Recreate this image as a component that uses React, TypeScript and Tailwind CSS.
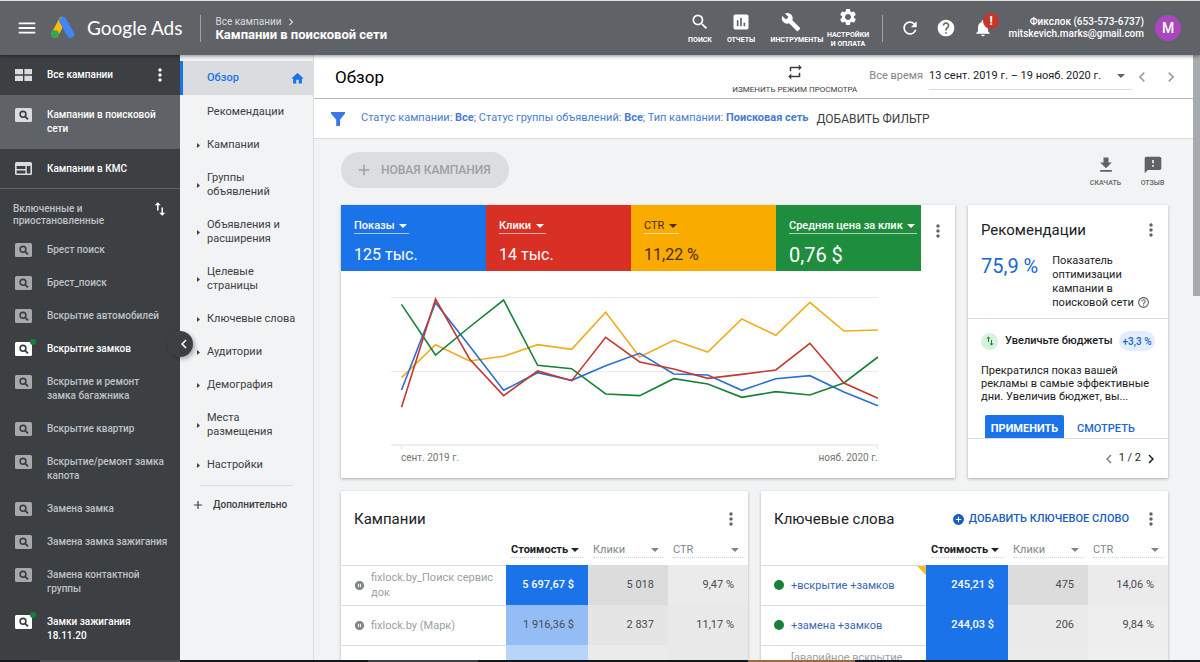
import type { ReactNode } from "react";
import {
  MdAdd,
  MdAddCircle,
  MdAssessment,
  MdBuild,
  MdChevronLeft,
  MdChevronRight,
  MdFeedback,
  MdGetApp,
  MdHelp,
  MdHelpOutline,
  MdHome,
  MdMenu,
  MdMoreVert,
  MdNotifications,
  MdPauseCircleFilled,
  MdRefresh,
  MdRepeat,
  MdSearch,
  MdSettings,
  MdSwapVert,
} from "react-icons/md";

function AdsLogo() {
  return (
    <svg viewBox="0 0 26 26" className="size-[26px] shrink-0" aria-hidden="true">
      <path d="M12.200 5.600 5.300 18.600" stroke="#fbbc04" strokeWidth="7.200" strokeLinecap="round" />
      <path d="M12.800 5.600 20.600 19.200" stroke="#4285f4" strokeWidth="7.400" strokeLinecap="round" />
      <circle cx="5" cy="19.200" r="3.900" fill="#34a853" />
    </svg>
  );
}

function Caret({ className = "" }: { className?: string }) {
  return (
    <svg viewBox="0 0 8 4" className={"h-1 w-2 shrink-0 fill-current " + className} aria-hidden="true">
      <path d="M0 0h8L4 4z" />
    </svg>
  );
}

function SearchTile({ className = "" }: { className?: string }) {
  return (
    <svg viewBox="0 0 17 14" className={"h-[14px] w-[17px] " + className} aria-hidden="true">
      <rect width="17" height="14" rx="1.5" fill="currentColor" />
      <circle cx="8" cy="6.300" r="2.900" fill="none" stroke="#3c4043" strokeWidth="1.600" />
      <path d="m10 8.400 3 3" stroke="#3c4043" strokeWidth="1.900" />
    </svg>
  );
}

function GridTile() {
  return (
    <svg viewBox="0 0 17 12" className="h-3 w-[17px] fill-[#dadce0]" aria-hidden="true">
      <path d="M0 0h8v5.200H0zM9.400 0H17v5.200H9.400zM0 6.800h8V12H0zM9.400 6.800H17V12H9.400z" />
    </svg>
  );
}

function DisplayTile() {
  return (
    <svg viewBox="0 0 17 13" className="h-[13px] w-[17px]" aria-hidden="true">
      <rect width="17" height="13" rx="1.500" fill="#dadce0" />
      <path d="M1.600 4h8.800v3H1.600zM1.600 8.400h8.800v3H1.600zM11.800 4h3.600v7.400h-3.600z" fill="#3c4043" />
    </svg>
  );
}

function Funnel() {
  return (
    <svg viewBox="0 0 14 14" className="size-[14px] fill-[#3b78e7]" aria-hidden="true">
      <path d="M0 0h14v1.600L9 7.800V14H5.200V7.800L0 1.600z" />
    </svg>
  );
}

type Campaign = { name: string; live?: boolean };

const campaigns: Campaign[] = [
  { name: "Брест поиск" },
  { name: "Брест_поиск" },
  { name: "Вскрытие автомобилей" },
  { name: "Вскрытие замков", live: true },
  { name: "Вскрытие и ремонт замка багажника" },
  { name: "Вскрытие квартир" },
  { name: "Вскрытие/ремонт замка капота" },
  { name: "Замена замка" },
  { name: "Замена замка зажигания" },
  { name: "Замена контактной группы" },
  { name: "Замки зажигания 18.11.20", live: true },
];

const sections = [
  "Кампании",
  "Группы объявлений",
  "Объявления и расширения",
  "Целевые страницы",
  "Ключевые слова",
  "Аудитории",
  "Демография",
  "Места размещения",
  "Настройки",
];

function TopAction({ icon, label, className }: { icon: ReactNode; label: ReactNode; className: string }) {
  return (
    <button type="button" className={"flex flex-col items-center gap-1 text-[7px] leading-[9px] font-bold text-white " + className}>
      {icon}
      <span className="whitespace-nowrap">{label}</span>
    </button>
  );
}

function TopBar() {
  return (
    <header className="relative z-20 flex h-[55px] shrink-0 items-center border-t border-[#dfe3e2] bg-[#5f6368] text-white shadow-[0_1px_4px_rgba(0,0,0,0.45)]">
      <button type="button" aria-label="Меню" className="ml-4 shrink-0">
        <MdMenu className="size-[22px]" />
      </button>
      <a href="#home" className="ml-3 flex items-center gap-[11px]">
        <AdsLogo />
        <span className="font-[Lato,sans-serif] text-[19px] leading-6 whitespace-nowrap">Google Ads</span>
      </a>
      <nav className="ml-[18px] flex h-[27px] flex-col justify-center border-l border-[#9aa0a6] pl-[14px] whitespace-nowrap">
        <a href="#all" className="flex items-center gap-[3px] text-[10px] leading-3 text-[#dadce0]">
          Все кампании
          <MdChevronRight className="size-[14px]" />
        </a>
        <a href="#search" className="text-[13px] leading-3 font-bold">
          Кампании в поисковой сети
        </a>
      </nav>
      <div className="ml-auto flex items-center">
        <TopAction className="w-10" icon={<MdSearch className="size-5" />} label="ПОИСК" />
        <TopAction className="w-[42px]" icon={<MdAssessment className="size-5" />} label="ОТЧЕТЫ" />
        <TopAction className="ml-1 w-[62px]" icon={<MdBuild className="mr-3 size-5" />} label="ИНСТРУМЕНТЫ" />
        <TopAction
          className="w-10"
          icon={<MdSettings className="size-5" />}
          label={
            <>
              НАСТРОЙКИ
              <br />И ОПЛАТА
            </>
          }
        />
        <span className="ml-[14px] h-[27px] w-px bg-[#9aa0a6]" />
        <button type="button" aria-label="Обновить" className="ml-[17px]">
          <MdRefresh className="size-5 stroke-current" />
        </button>
        <button type="button" aria-label="Справка" className="ml-4">
          <MdHelp className="size-5" />
        </button>
        <button type="button" aria-label="Уведомления" className="relative ml-[17px]">
          <MdNotifications className="size-5" />
          <span className="absolute -top-[5px] left-[10px] flex size-4 items-center justify-center rounded-full bg-[#c5372c] text-[12px] leading-none font-bold">
            !
          </span>
        </button>
        <p className="ml-[15px] w-[136px] text-right text-[10px] leading-3 font-medium whitespace-nowrap">
          Фикслок (653-573-6737)
          <br />
          mitskevich.marks@gmail.com
        </p>
        <button type="button" aria-label="Аккаунт" className="mr-[19px] ml-[11px] size-[26px] rounded-full bg-[#ab47bc] text-[14px] leading-none font-medium">
          M
        </button>
      </div>
    </header>
  );
}

function CampaignRail() {
  return (
    <aside className="relative z-10 w-[180px] shrink-0 bg-[#3c4043] text-[10px] leading-[14px] font-medium text-white">
      <div className="flex h-10 items-center pl-[15px]">
        <GridTile />
        <a href="#all" className="ml-[15px] flex-1">
          Все кампании
        </a>
        <button type="button" aria-label="Ещё" className="mr-[10px]">
          <MdMoreVert className="size-5" />
        </button>
      </div>
      <a href="#search" className="flex bg-[#5f6368] py-[13px] pr-5 pl-[15px] text-white">
        <SearchTile className="shrink-0 text-[#dadce0]" />
        <span className="ml-[15px]">Кампании в поисковой сети</span>
      </a>
      <a href="#display" className="flex h-10 items-center border-b border-[#5f6368] pl-[15px]">
        <DisplayTile />
        <span className="ml-[15px]">Кампании в КМС</span>
      </a>
      <div className="flex items-start justify-between pt-[14px] pr-[11px] pl-[13px] leading-3 text-[#bdc1c6]">
        <span className="w-[110px]">Включенные и приостановленные</span>
        <button type="button" aria-label="Сортировка">
          <MdSwapVert className="-mt-[3px] size-[18px] text-white" />
        </button>
      </div>
      <ul className="mt-[6px]">
        {campaigns.map((c) => (
          <li key={c.name}>
            <a href="#campaign" className={"flex pt-[10px] pr-3 pb-[9px] pl-[15px] " + (c.live ? "text-white" : "text-[#bdc1c6]")}>
              <span className="relative h-[14px] shrink-0">
                <SearchTile className={c.live ? "text-white" : "text-[#a6a8ab]"} />
                {c.live && <span className="absolute -top-[3px] -right-1 size-[6px] rounded-full bg-[#188038]" />}
              </span>
              <span className="ml-[15px]">{c.name}</span>
            </a>
          </li>
        ))}
      </ul>
      <button
        type="button"
        aria-label="Свернуть"
        className="absolute top-[276px] -right-[13px] flex size-[26px] items-center justify-end rounded-full bg-[#3c4043] shadow-[2px_2px_4px_rgba(0,0,0,0.3)]"
      >
        <MdChevronLeft className="size-[18px] stroke-current" />
      </button>
    </aside>
  );
}

function SectionNav() {
  return (
    <nav className="w-[134px] shrink-0 border-r border-[#dadce0] bg-[#f1f3f4] pt-[6px] text-[11px] leading-[14px] text-[#3c4043]">
      <a href="#overview" className="flex h-[34px] items-center justify-between border-l-3 border-[#1a73e8] bg-[#dadce0] pr-2 pl-6 font-medium text-[#1a73e8]">
        Обзор
        <MdHome className="size-[15px]" />
      </a>
      <a href="#recommendations" className="block pt-[10px] pb-[9px] pl-[27px]">
        Рекомендации
      </a>
      {sections.map((s) => (
        <a key={s} href="#section" className="flex items-center pt-[10px] pr-2 pb-[9px] pl-[17px]">
          <svg viewBox="0 0 3 5" className="h-[5px] w-[3px] shrink-0 fill-[#3c4043]" aria-hidden="true">
            <path d="M0 0l3 2.500L0 5z" />
          </svg>
          <span className={s.includes("и ") || s === "Ключевые слова" ? "ml-[7px]" : "ml-[7px] max-w-[75px]"}>{s}</span>
        </a>
      ))}
      <div className="mt-1 mr-5 ml-5 border-t border-[#dadce0]" />
      <button type="button" className="mt-3 ml-[11px] flex items-center gap-2 text-[10px] font-medium">
        <MdAdd className="size-[14px]" />
        Дополнительно
      </button>
    </nav>
  );
}

function PageHeader() {
  return (
    <>
      <div className="flex h-[44px] shrink-0 items-center border-b border-[#b4b6b9] bg-white pr-3 pl-[21px] shadow-sm">
        <h1 className="text-[17px] leading-6 text-black">Обзор</h1>
        <button type="button" className="ml-auto flex flex-col items-center gap-1 pt-1 text-[8px] leading-[10px] whitespace-nowrap text-[#3c4043]">
          <MdRepeat className="size-[18px]" />
          ИЗМЕНИТЬ РЕЖИМ ПРОСМОТРА
        </button>
        <span className="ml-3 text-[11px] whitespace-nowrap text-[#80868b]">Все время</span>
        <button type="button" className="ml-[6px] flex h-[26px] w-[203px] items-center justify-between border-b border-[#dadce0] pr-[7px] text-[11px] whitespace-nowrap text-[#202124]">
          13 сент. 2019 г. – 19 нояб. 2020 г.
          <Caret className="text-[#5f6368]" />
        </button>
        <button type="button" aria-label="Предыдущий период" className="text-[#9aa0a6]">
          <MdChevronLeft className="size-5" />
        </button>
        <button type="button" aria-label="Следующий период" className="ml-[9px] text-[#9aa0a6]">
          <MdChevronRight className="size-5" />
        </button>
      </div>
      <div className="flex h-10 shrink-0 items-center border-b border-[#dadce0] bg-white pl-[17px] whitespace-nowrap">
        <Funnel />
        <p className="ml-4 text-[11px] text-[#4a7bd0]">
          Статус кампании: <b>Все</b>; Статус группы объявлений: <b>Все</b>; Тип кампании: <b>Поисковая сеть</b>
        </p>
        <button type="button" className="ml-2 text-[12px] text-[#3c4043]">
          ДОБАВИТЬ ФИЛЬТР
        </button>
      </div>
    </>
  );
}

function Score({ name, value, className, large, weight = "font-medium" }: { name: string; value: string; className: string; large?: boolean; weight?: string }) {
  return (
    <div className={"flex h-[66px] min-w-0 flex-1 flex-col items-start pt-[13px] pl-[13px] " + className}>
      <label className="flex h-4 items-center gap-1 border-b border-white/60 pr-[2px]">
        <select aria-label={"Показатель: " + name} className={"appearance-none bg-transparent text-[11px] leading-[14px] " + weight}>
          <option>{name}</option>
        </select>
        <Caret />
      </label>
      <span className={"mt-[9px] leading-6 " + (large ? "text-[20px]" : "text-[16px]")}>{value}</span>
    </div>
  );
}

const series = [
  { color: "#f2ab1c", values: [263, 164, 213, 199, 164, 178, 67, 201, 151, 186, 87, 136, 37, 123, 120] },
  { color: "#2a6fd6", values: [300, 38, 168, 301, 248, 271, 227, 190, 252, 255, 301, 266, 257, 306, 347] },
  { color: "#188038", values: [43, 195, 111, 30, 226, 236, 312, 317, 266, 282, 322, 305, 315, 279, 201] },
  { color: "#c5392f", values: [352, 27, 207, 317, 243, 272, 142, 216, 237, 265, 253, 240, 160, 279, 325] },
];

function Chart() {
  return (
    <svg viewBox="0 0 614 178" className="block w-full" role="img" aria-label="Динамика показателей">
      <g stroke="#e8eaed" fill="none">
        <path d="M50 26.500h487M50 100.500h487" />
        <path d="M50 174h487M60.500 174v4M536.500 174v4" strokeWidth="1.500" />
      </g>
      {series.map((s) => (
        <polyline
          key={s.color}
          points={s.values.map((v, i) => `${60.5 + i * 34.03},${v / 3 + 19}`).join(" ")}
          fill="none"
          stroke={s.color}
          strokeWidth="1.600"
        />
      ))}
    </svg>
  );
}

const card = "rounded-[1px] bg-white shadow-[0_1px_3px_rgba(60,64,67,0.4)]";

function MoreButton({ className = "" }: { className?: string }) {
  return (
    <button type="button" aria-label="Ещё" className={"text-[#5f6368] " + className}>
      <MdMoreVert className="size-5" />
    </button>
  );
}

function ChartCard() {
  return (
    <section className={"min-w-0 " + card}>
      <div className="flex">
        <Score name="Показы" value="125 тыс." className="bg-[#1a73e8] text-white" />
        <Score name="Клики" value="14 тыс." className="bg-[#d93025] text-white" />
        <Score name="CTR" value="11,22 %" className="bg-[#f9ab00] text-[#4a2c00]" weight="font-normal" />
        <Score name="Средняя цена за клик" value="0,76 $" className="bg-[#1e8e3e] text-white" large />
        <MoreButton className="h-[52px] w-[34px] shrink-0 pl-[7px]" />
      </div>
      <Chart />
      <div className="flex justify-between pt-[3px] pr-[77px] pb-[14px] pl-[60px] text-[10px] leading-3 text-[#757575]">
        <span>сент. 2019 г.</span>
        <span>нояб. 2020 г.</span>
      </div>
    </section>
  );
}

function RecommendationCard() {
  return (
    <section className={"flex flex-col " + card}>
      <div className="flex items-center justify-between pt-[13px] pr-[7px] pl-[13px]">
        <h2 className="text-[15px] leading-6 text-[#202124]">Рекомендации</h2>
        <MoreButton />
      </div>
      <div className="flex gap-[14px] px-[13px] pt-3 pb-2 text-[11px] leading-[14px] text-[#202124]">
        <span className="text-[20px] leading-6 whitespace-nowrap text-[#1967d2]">75,9 %</span>
        <p className="whitespace-nowrap">
          Показатель
          <br />
          оптимизации
          <br />
          кампании в
          <br />
          поисковой сети <MdHelpOutline className="inline size-[13px] align-[-3px] text-[#5f6368]" />
        </p>
      </div>
      <div className="flex flex-1 flex-col border-t border-[#dadce0] px-[13px] pt-3">
        <div className="flex h-5 items-center">
          <span className="flex size-[17px] items-center justify-center rounded-full bg-[#d7f1dc]">
            <MdSwapVert className="size-3 text-[#188038]" />
          </span>
          <h3 className="ml-[7px] text-[11px] font-medium whitespace-nowrap text-[#202124]">Увеличьте бюджеты</h3>
          <span className="ml-auto flex h-5 w-9 items-center justify-center rounded-full bg-[#e3edfc] text-[10px] font-medium whitespace-nowrap text-[#1967d2]">+3,3 %</span>
        </div>
        <p className="mt-[13px] text-[11px] leading-[13px] whitespace-nowrap text-[#202124]">
          Прекратился показ вашей
          <br />
          рекламы в самые эффективные
          <br />
          дни. Увеличив бюджет, вы...
        </p>
        <div className="mt-auto flex items-center text-[11px] font-medium">
          <button type="button" className="ml-1 h-[23px] w-[79px] rounded-t-[2px] bg-[#1a73e8] pt-[5px] font-bold text-white">
            ПРИМЕНИТЬ
          </button>
          <a href="#view" className="ml-[13px] pt-[5px] text-[#1967d2]">
            СМОТРЕТЬ
          </a>
        </div>
      </div>
      <div className="flex h-10 items-center justify-end border-t border-[#dadce0] pr-2 text-[11px] text-[#202124]">
        <button type="button" aria-label="Назад" className="text-[#80868b]">
          <MdChevronLeft className="size-[18px]" />
        </button>
        <span className="mx-px">1 / 2</span>
        <button type="button" aria-label="Вперёд">
          <MdChevronRight className="size-[18px]" />
        </button>
      </div>
    </section>
  );
}

type Cell = { text: string; tone: string };
type Row = { label: ReactNode; marker: ReactNode; cells: Cell[]; flag?: boolean };

const paused = <MdPauseCircleFilled className="size-[11px] shrink-0 text-[#80868b]" />;
const enabled = <span className="mr-px size-[10px] shrink-0 rounded-full bg-[#188038]" />;

const campaignRows: Row[] = [
  {
    label: <a href="#c1" className="text-[#9aa0a6]">fixlock.by_Поиск сервис док</a>,
    marker: paused,
    cells: [
      { text: "5 697,67 $", tone: "bg-[#1a73e8] text-white font-medium" },
      { text: "5 018", tone: "bg-[#dcdcdc] text-[#4a4d52]" },
      { text: "9,47 %", tone: "bg-[#ebebeb] text-[#4a4d52]" },
    ],
  },
  {
    label: <a href="#c2" className="text-[#9aa0a6]">fixlock.by (Марк)</a>,
    marker: paused,
    cells: [
      { text: "1 916,36 $", tone: "bg-[#94bdf5] text-[#4a4d52]" },
      { text: "2 837", tone: "bg-[#e5e5e5] text-[#4a4d52]" },
      { text: "11,17 %", tone: "bg-[#e9e9e9] text-[#4a4d52]" },
    ],
  },
  {
    label: null,
    marker: null,
    cells: [
      { text: "", tone: "bg-[#b9d4f9]" },
      { text: "", tone: "bg-[#ebebeb]" },
      { text: "", tone: "bg-[#e8e8e8]" },
    ],
  },
];

const keywordRows: Row[] = [
  {
    label: <a href="#k1" className="text-[#3c66b5]">+вскрытие +замков</a>,
    marker: enabled,
    flag: true,
    cells: [
      { text: "245,21 $", tone: "bg-[#1a73e8] text-white font-medium" },
      { text: "475", tone: "bg-[#dcdcdc] text-[#4a4d52]" },
      { text: "14,06 %", tone: "bg-[#ebebeb] text-[#4a4d52]" },
    ],
  },
  {
    label: <a href="#k2" className="text-[#3c66b5]">+замена +замков</a>,
    marker: enabled,
    cells: [
      { text: "244,03 $", tone: "bg-[#1a73e8] text-white font-medium" },
      { text: "206", tone: "bg-[#eaeaea] text-[#4a4d52]" },
      { text: "9,84 %", tone: "bg-[#eeeeee] text-[#4a4d52]" },
    ],
  },
  {
    label: <a href="#k3" className="block pb-[15px] pl-[17px] text-[#9aa0a6]">[аварийное вскрытие</a>,
    marker: null,
    cells: [
      { text: "", tone: "bg-[#1a73e8]" },
      { text: "", tone: "bg-[#ebebeb]" },
      { text: "", tone: "bg-[#efefef]" },
    ],
  },
];

const columns = [
  { name: "Стоимость", width: "w-[82px]", tone: "font-bold text-[#202124]" },
  { name: "Клики", width: "w-20", tone: "text-[#80868b]" },
  { name: "CTR", width: "w-20", tone: "text-[#80868b]" },
];

function DataTable({ rows, name }: { rows: Row[]; name: string }) {
  return (
    <table className="w-full table-fixed border-collapse text-[11px]">
      <thead>
        <tr className="h-[27px] align-top">
          <th scope="col" aria-label={name} />
          {columns.map((c) => (
            <th key={c.name} scope="col" className={"px-[5px] pt-1 font-normal " + c.width}>
              <label className={"flex h-4 items-center justify-between border-b border-dotted border-[#d0d3d6] pr-1 " + c.tone}>
                <select aria-label={"Столбец: " + c.name} className="appearance-none bg-transparent leading-[14px]">
                  <option>{c.name}</option>
                </select>
                <Caret />
              </label>
            </th>
          ))}
        </tr>
      </thead>
      <tbody>
        {rows.map((r, i) => (
          <tr key={i} className="h-10">
            <td className="relative border-t border-[#dadce0] py-0 pr-2 pl-[13px]">
              <div className="flex items-center gap-[6px] leading-[15px]">
                {r.marker}
                {r.label}
              </div>
              {r.flag && (
                <svg viewBox="0 0 9 9" className="absolute top-0 right-0 size-[9px] fill-[#f2bd27]" aria-hidden="true">
                  <path d="M0 0h9v9z" />
                </svg>
              )}
            </td>
            {r.cells.map((cell, j) => (
              <td key={j} className={"py-0 pr-[14px] text-right whitespace-nowrap " + cell.tone}>
                {cell.text}
              </td>
            ))}
          </tr>
        ))}
      </tbody>
    </table>
  );
}

function TableCard({ title, action, rows }: { title: string; action?: ReactNode; rows: Row[] }) {
  return (
    <section className={"min-w-0 " + card}>
      <div className="flex h-[47px] items-center pt-[9px] pr-[7px] pl-[13px]">
        <h2 className="flex-1 text-[15px] leading-6 text-[#202124]">{title}</h2>
        {action}
        <MoreButton />
      </div>
      <DataTable rows={rows} name={title} />
    </section>
  );
}

export default function App() {
  return (
    <div className="flex h-screen flex-col overflow-hidden bg-[#f1f3f4] font-[Roboto,sans-serif]">
      <TopBar />
      <div className="flex min-h-0 flex-1">
        <CampaignRail />
        <SectionNav />
        <main className="flex min-w-0 flex-1 flex-col overflow-hidden">
          <PageHeader />
          <div className="min-h-0 flex-1 overflow-hidden pt-[13px] pr-[25px] pl-[27px]">
            <div className="flex items-center">
              <button type="button" className="flex h-9 w-[168px] items-center gap-2 rounded-full bg-[#dcdddf] pl-[14px] text-[12px] font-medium whitespace-nowrap text-[#9aa0a6]">
                <MdAdd className="size-[18px]" />
                НОВАЯ КАМПАНИЯ
              </button>
              <div className="-mr-2 ml-auto flex pt-[3px] text-[7px] leading-[9px] font-medium text-[#5f6368]">
                <button type="button" className="flex w-[47px] flex-col items-center gap-1">
                  <MdGetApp className="size-5" />
                  СКАЧАТЬ
                </button>
                <button type="button" className="flex w-[47px] flex-col items-center gap-1">
                  <MdFeedback className="size-5" />
                  ОТЗЫВ
                </button>
              </div>
            </div>
            <div className="mt-[17px] grid grid-cols-[minmax(0,1fr)_200px] gap-[13px]">
              <ChartCard />
              <RecommendationCard />
            </div>
            <div className="mt-[13px] grid grid-cols-2 gap-[13px]">
              <TableCard title="Кампании" rows={campaignRows} />
              <TableCard
                title="Ключевые слова"
                rows={keywordRows}
                action={
                  <button type="button" className="mr-3 flex items-center gap-1 text-[11px] font-medium whitespace-nowrap text-[#1a5dc0]">
                    <MdAddCircle className="size-[13px]" />
                    ДОБАВИТЬ КЛЮЧЕВОЕ СЛОВО
                  </button>
                }
              />
            </div>
          </div>
        </main>
        <div className="w-[7px] shrink-0 bg-[#f1f3f4]" aria-hidden="true">
          <div className="h-[241px] bg-[#a8abae]" />
        </div>
      </div>
      <div className="flex h-[2px] shrink-0 bg-[#14161c]" aria-hidden="true">
        <span className="ml-10 w-[140px] bg-[#4a4d50]" />
        <span className="ml-[188px] w-[110px] bg-[#3c4043]" />
        <span className="ml-[270px] w-[107px] bg-[#a5673f]" />
      </div>
    </div>
  );
}
